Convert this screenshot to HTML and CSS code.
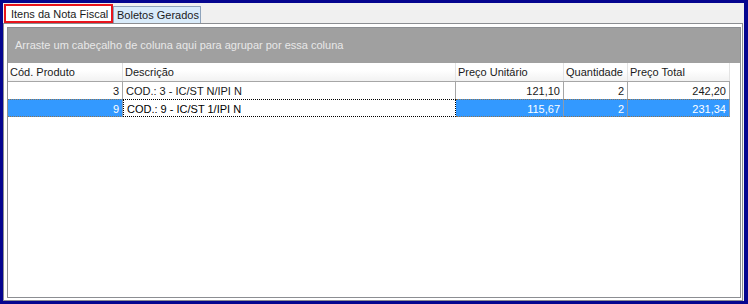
FILE: index.html
```html
<!DOCTYPE html>
<html lang="pt-BR">
<head>
<meta charset="utf-8">
<title>Itens da Nota Fiscal</title>
<link rel="stylesheet" href="styles.css">
</head>
<body>
<div class="window">
  <div class="tabs">
    <div class="tab tab-active">Itens da Nota Fiscal</div>
    <div class="tab tab-inactive">Boletos Gerados</div>
  </div>
  <div class="tab-page">
    <div class="grid">
      <div class="group-panel">Arraste um cabeçalho de coluna aqui para agrupar por essa coluna</div>
      <div class="rows">
        <div class="row header">
          <div class="cell c1">Cód. Produto</div>
          <div class="cell c2">Descrição</div>
          <div class="cell c3">Preço Unitário</div>
          <div class="cell c4">Quantidade</div>
          <div class="cell c5">Preço Total</div>
        </div>
        <div class="row data">
          <div class="cell c1 num">3</div>
          <div class="cell c2">COD.: 3 - IC/ST N/IPI N</div>
          <div class="cell c3 num">121,10</div>
          <div class="cell c4 num">2</div>
          <div class="cell c5 num">242,20</div>
        </div>
        <div class="row data selected">
          <div class="cell c1 num">9</div>
          <div class="cell c2 focus">COD.: 9 - IC/ST 1/IPI N</div>
          <div class="cell c3 num">115,67</div>
          <div class="cell c4 num">2</div>
          <div class="cell c5 num">231,34</div>
        </div>
      </div>
    </div>
  </div>
</div>
</body>
</html>
```

FILE: styles.css
```css
* { box-sizing: border-box; }
html, body { margin: 0; padding: 0; }
body {
  width: 748px;
  height: 304px;
  background: #05058f;
  font-family: Tahoma, "Liberation Sans", Arial, sans-serif;
  font-size: 11px;
  color: #1a1a1a;
}
.window {
  position: relative;
  margin: 3px 4px 3px 3px;
  width: 741px;
  height: 298px;
  background: #f0f0f0;
  display: flex;
  flex-direction: column;
}
.tabs {
  height: 20px;
  display: flex;
  align-items: flex-end;
}
.tab {
  line-height: 14px;
  white-space: nowrap;
}
.tab-active {
  margin-left: 1px;
  height: 19px;
  width: 109px;
  background: #ffffff;
  border: 2px solid #e8141c;
  padding: 1px 0 0 5px;
  position: relative;
  z-index: 1;
}
.tab-inactive {
  height: 17px;
  width: 88px;
  background: #d9ebfa;
  border: 1px solid #8ea3bb;
  border-bottom: none;
  padding: 1px 0 0 3px;
  margin-left: 0;
}
.tab-page {
  flex: 1;
  margin-right: 0;
  width: 740px;
  background: #ffffff;
  border: 1px solid #8c8e92;
  padding: 3px 1px 2px 3px;
  display: flex;
}
.grid {
  flex: 1;
  border: 1px solid #8c8e92;
  background: #ffffff;
  display: flex;
  flex-direction: column;
}
.group-panel {
  height: 35px;
  background: #a0a0a0;
  color: #e8e8e8;
  padding: 11px 0 0 7px;
  line-height: 13px;
}
.rows {
  display: flex;
  flex-direction: column;
}
.row {
  display: grid;
  grid-template-columns: 115px 333px 108px 64px 102px;
}
.header {
  height: 18px;
}
.header .cell {
  background: linear-gradient(#ffffff, #ffffff 40%, #f2f2f2);
  border-right: 1px solid #e4e4e4;
  padding: 3px 0 0 2px;
  line-height: 13px;
}
.header .c1 { border-right-color: #dedede; }
.data {
  height: 18px;
}
.data .cell {
  border-top: 1px solid #a6a6a6;
  border-right: 1px solid #a6a6a6;
  padding: 2px 3px 0 3px;
  line-height: 14px;
  white-space: nowrap;
}
.num { text-align: right; }
.selected .cell {
  background: #3399ff;
  color: #ffffff;
  border-top: 1px dotted #8b7355;
  border-bottom: 1px dotted #8b7355;
  border-right: 1px solid #8b9bb0;
}
.selected .cell.focus {
  background: #ffffff;
  color: #000000;
  border: 1px dotted #000000;
}
.selected .c1 {
  border-left: none;
}
```
